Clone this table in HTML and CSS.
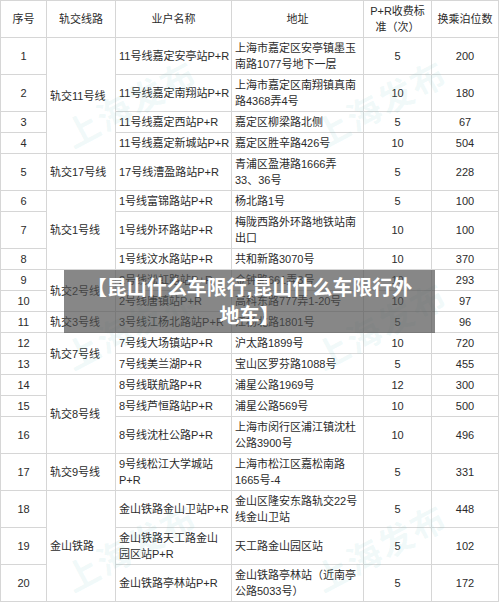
FILE: index.html
```html
<!DOCTYPE html>
<html lang="zh-CN">
<head>
<meta charset="utf-8">
<title>P+R 停车场</title>
<link rel="stylesheet" href="styles.css">
</head>
<body>
<div class="page">
  <table class="pr-table">
    <colgroup>
      <col class="c-no"><col class="c-line"><col class="c-name"><col class="c-addr"><col class="c-fee"><col class="c-num">
    </colgroup>
    <thead>
      <tr>
        <th>序号</th><th>轨交线路</th><th>业户名称</th><th>地址</th><th>P+R收费标<br>准（次）</th><th>换乘泊位数</th>
      </tr>
    </thead>
    <tbody>
      <tr><td class="ctr">1</td><td class="line" rowspan="4">轨交11号线</td><td>11号线嘉定安亭站P+R</td><td class="addr">上海市嘉定区安亭镇墨玉南路1077号地下一层</td><td class="ctr">5</td><td class="ctr">200</td></tr>
      <tr><td class="ctr">2</td><td>11号线嘉定南翔站P+R</td><td class="addr">上海市嘉定区南翔镇真南路4368弄4号</td><td class="ctr">10</td><td class="ctr">180</td></tr>
      <tr><td class="ctr">3</td><td>11号线嘉定西站P+R</td><td class="addr">嘉定区柳梁路北侧</td><td class="ctr">5</td><td class="ctr">67</td></tr>
      <tr><td class="ctr">4</td><td>11号线嘉定新城站P+R</td><td class="addr">嘉定区胜辛路426号</td><td class="ctr">10</td><td class="ctr">504</td></tr>
      <tr><td class="ctr">5</td><td class="line">轨交17号线</td><td>17号线漕盈路站P+R</td><td class="addr">青浦区盈港路1666弄33、36号</td><td class="ctr">5</td><td class="ctr">228</td></tr>
      <tr><td class="ctr">6</td><td class="line" rowspan="3">轨交1号线</td><td>1号线富锦路站P+R</td><td class="addr">杨北路1号</td><td class="ctr">5</td><td class="ctr">100</td></tr>
      <tr><td class="ctr">7</td><td>1号线外环路站P+R</td><td class="addr">梅陇西路外环路地铁站南出口</td><td class="ctr">10</td><td class="ctr">100</td></tr>
      <tr><td class="ctr">8</td><td>1号线汶水路站P+R</td><td class="addr">共和新路3070号</td><td class="ctr">10</td><td class="ctr">370</td></tr>
      <tr><td class="ctr">9</td><td class="line" rowspan="2">轨交2号线</td><td>2号线淞虹路站P+R</td><td class="addr">金钟路661弄3号</td><td class="ctr">10</td><td class="ctr">293</td></tr>
      <tr><td class="ctr">10</td><td>2号线唐镇站P+R</td><td class="addr">高科东路777弄1-20号</td><td class="ctr">10</td><td class="ctr">97</td></tr>
      <tr><td class="ctr">11</td><td class="line">轨交3号线</td><td>3号线江杨北路站P+R</td><td class="addr">江杨北路1801号</td><td class="ctr">5</td><td class="ctr">96</td></tr>
      <tr><td class="ctr">12</td><td class="line" rowspan="2">轨交7号线</td><td>7号线大场镇站P+R</td><td class="addr">沪太路1899号</td><td class="ctr">10</td><td class="ctr">720</td></tr>
      <tr><td class="ctr">13</td><td>7号线美兰湖P+R</td><td class="addr">宝山区罗芬路1088号</td><td class="ctr">5</td><td class="ctr">455</td></tr>
      <tr><td class="ctr">14</td><td class="line" rowspan="3">轨交8号线</td><td>8号线联航路P+R</td><td class="addr">浦星公路1969号</td><td class="ctr">12</td><td class="ctr">300</td></tr>
      <tr><td class="ctr">15</td><td>8号线芦恒路站P+R</td><td class="addr">浦星公路569号</td><td class="ctr">10</td><td class="ctr">500</td></tr>
      <tr><td class="ctr">16</td><td>8号线沈杜公路P+R</td><td class="addr">上海市闵行区浦江镇沈杜公路3900号</td><td class="ctr">10</td><td class="ctr">496</td></tr>
      <tr><td class="ctr">17</td><td class="line">轨交9号线</td><td>9号线松江大学城站P+R</td><td class="addr">上海市松江区嘉松南路1665号-4</td><td class="ctr">5</td><td class="ctr">331</td></tr>
      <tr><td class="ctr">18</td><td class="line" rowspan="3">金山铁路</td><td>金山铁路金山卫站P+R</td><td class="addr">金山区隆安东路轨交22号线金山卫站</td><td class="ctr">5</td><td class="ctr">448</td></tr>
      <tr><td class="ctr">19</td><td>金山铁路天工路金山<span class="keep">园区</span>站P+R</td><td class="addr">天工路金山园区站</td><td class="ctr">5</td><td class="ctr">102</td></tr>
      <tr><td class="ctr">20</td><td>金山铁路亭林站P+R</td><td class="addr">金山铁路亭林站（近南亭公路5033号）</td><td class="ctr">5</td><td class="ctr">172</td></tr>
    </tbody>
  </table>

  <div class="watermarks" aria-hidden="true">
    <span class="wm wm1">上海发布</span>
    <span class="wm wm2">上海发布</span>
    <span class="wm wm3">上海发布</span>
    <span class="wm wm4">上海发布</span>
    <span class="wm wm5">上海发布</span>
    <span class="wm wm6">上海发布</span>
  </div>

  <div class="caption">【昆山什么车限行,昆山什么车限行外地车】</div>
</div>
</body>
</html>
```

FILE: styles.css
```css
html, body {
  margin: 0;
  padding: 0;
  background: #ffffff;
}

.page {
  position: relative;
  width: 500px;
  height: 603px;
  overflow: hidden;
  font-family: "Liberation Sans", "Noto Sans CJK SC", sans-serif;
  font-size: 11px;
  color: #2b2b2b;
  text-autospace: no-autospace;
}

.pr-table {
  border-collapse: collapse;
  table-layout: fixed;
  width: 498px;
}

.c-no { width: 46px; }
.c-line { width: 69px; }
.c-name { width: 116px; }
.c-addr { width: 132px; }
.c-fee { width: 68px; }
.c-num { width: 67px; }

.pr-table th,
.pr-table td {
  border: 1px solid #d6d6d6;
  padding: 2px 1px 2px 3px;
  line-height: 16px;
  vertical-align: middle;
  text-align: left;
  font-weight: normal;
}

.pr-table th {
  text-align: center;
  padding: 2px 1px;
}

.pr-table td.ctr {
  text-align: center;
  padding: 2px 1px;
}

.pr-table td.addr {
  padding-right: 4px;
}

.keep {
  white-space: nowrap;
}

.watermarks {
  position: absolute;
  inset: 0;
  pointer-events: none;
}

.wm {
  position: absolute;
  font-size: 34px;
  font-weight: bold;
  letter-spacing: 2px;
  color: rgba(110, 200, 200, 0.1);
  transform: rotate(-28deg);
  white-space: nowrap;
}

.wm1 { left: 58px; top: 78px; }
.wm2 { left: 308px; top: 78px; }
.wm3 { left: 58px; top: 300px; }
.wm4 { left: 308px; top: 300px; }
.wm5 { left: 58px; top: 522px; }
.wm6 { left: 308px; top: 522px; }

.caption {
  position: absolute;
  left: 64px;
  top: 270px;
  width: 371px;
  height: 63px;
  box-sizing: border-box;
  padding: 4px 18px 3px;
  background: rgba(78, 78, 78, 0.68);
  color: #ffffff;
  font-size: 20px;
  font-weight: bold;
  line-height: 28px;
  text-align: center;
}
```
